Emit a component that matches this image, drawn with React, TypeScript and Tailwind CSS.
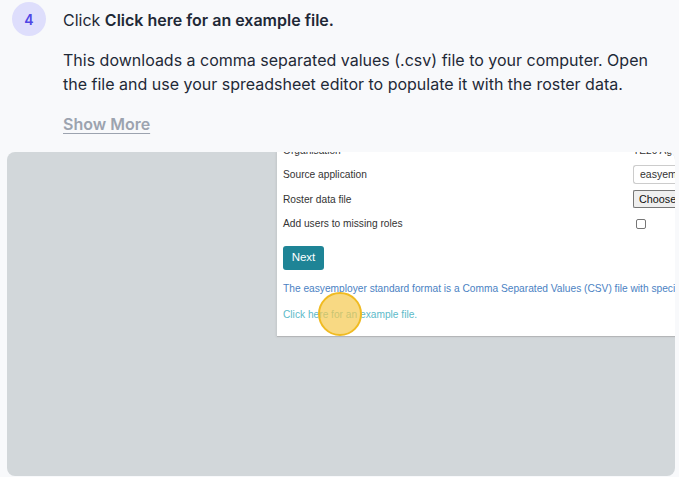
import React from 'react';

const formRows = [
  { label: 'Organisation', kind: 'text' as const, value: 'TE20 Ag' },
  { label: 'Source application', kind: 'select' as const, value: 'easyem' },
  { label: 'Roster data file', kind: 'file' as const, value: 'Choose' },
  { label: 'Add users to missing roles', kind: 'check' as const, value: '' },
];

function FormControl({ kind, value }: { kind: 'text' | 'select' | 'file' | 'check'; value: string }) {
  if (kind === 'text') {
    return <span className="text-[10.2px] text-[#333]">{value}</span>;
  }
  if (kind === 'select') {
    return (
      <div className="h-[19px] w-[50px] rounded-l-[3px] border border-r-0 border-[#ccc] bg-white pl-[6px] text-[10.5px] leading-[17px] text-[#333]">
        {value}
      </div>
    );
  }
  if (kind === 'file') {
    return (
      <div className="h-[18px] w-[50px] rounded-l-[2px] border border-r-0 border-[#767676] bg-[#efefef] pl-[5px] text-[10.8px] leading-[16px] text-[#111]">
        {value}
      </div>
    );
  }
  return <div className="ml-[3px] h-[10px] w-[10px] rounded-[2px] border border-[#767676] bg-white" />;
}

export default function App() {
  return (
    <div className="h-[477px] w-[679px] overflow-hidden bg-[#f8f9fb]" style={{ fontFamily: 'Inter, "Noto Sans", sans-serif' }}>
      {/* step text */}
      <div className="flex gap-[17px] pl-[12px] pt-[2px]">
        <div className="flex h-[34px] w-[34px] shrink-0 items-center justify-center rounded-full bg-[#dedefc] text-[14px] font-semibold text-[#4f46e5]">
          4
        </div>
        <div className="pt-[8px] text-[16px] text-[#1f2937]">
          <p className="leading-[20px]">
            Click <span className="font-semibold">Click here for an example file.</span>
          </p>
          <p className="mt-[19px] w-[590px] leading-[23.5px]">
            This downloads a comma separated values (.csv) file to your computer. Open the file and use your spreadsheet editor to populate it with the roster data.
          </p>
          <p className="mt-[16px] font-semibold text-[#9ca3af] underline underline-offset-[3px]">Show More</p>
        </div>
      </div>

      {/* screenshot */}
      <div className="mx-[7px] mt-[16px] flex h-[324px] w-[668px] overflow-hidden rounded-[8px] bg-[#d2d7da]">
        <div className="ml-[270px] h-[185px] flex-1 border-b border-[#b4b6b8] bg-white pl-[6px] shadow-[-1px_0_2px_rgba(0,0,0,0.08)]" style={{ fontFamily: 'Arial, "Liberation Sans", sans-serif' }}>
          <div className="-mt-[14px] flex flex-col">
            {formRows.map((row) => (
              <div key={row.label} className="flex h-[24.5px] items-center">
                <span className="w-[350px] text-[10.2px] text-[#333]">{row.label}</span>
                <FormControl kind={row.kind} value={row.value} />
              </div>
            ))}
          </div>
          <button className="mt-[10px] h-[24px] w-[41px] rounded-[3px] bg-[#1e8496] text-[11.5px] text-white">Next</button>
          <p className="mt-[11px] h-[15px] whitespace-nowrap text-[10.2px] leading-[15px] text-[#4b82c3]">
            The easyemployer standard format is a Comma Separated Values (CSV) file with specified columns
          </p>
          <div className="relative mt-[11px]">
            <p className="h-[15px] text-[10.2px] leading-[15px] text-[#5cbac9]">Click here for an example file.</p>
            <div className="absolute left-[35px] top-[-15px] h-[44px] w-[44px] rounded-full border-2 border-[#f0bb22] bg-[#f5c94f]/70" />
          </div>
        </div>
      </div>
    </div>
  );
}
